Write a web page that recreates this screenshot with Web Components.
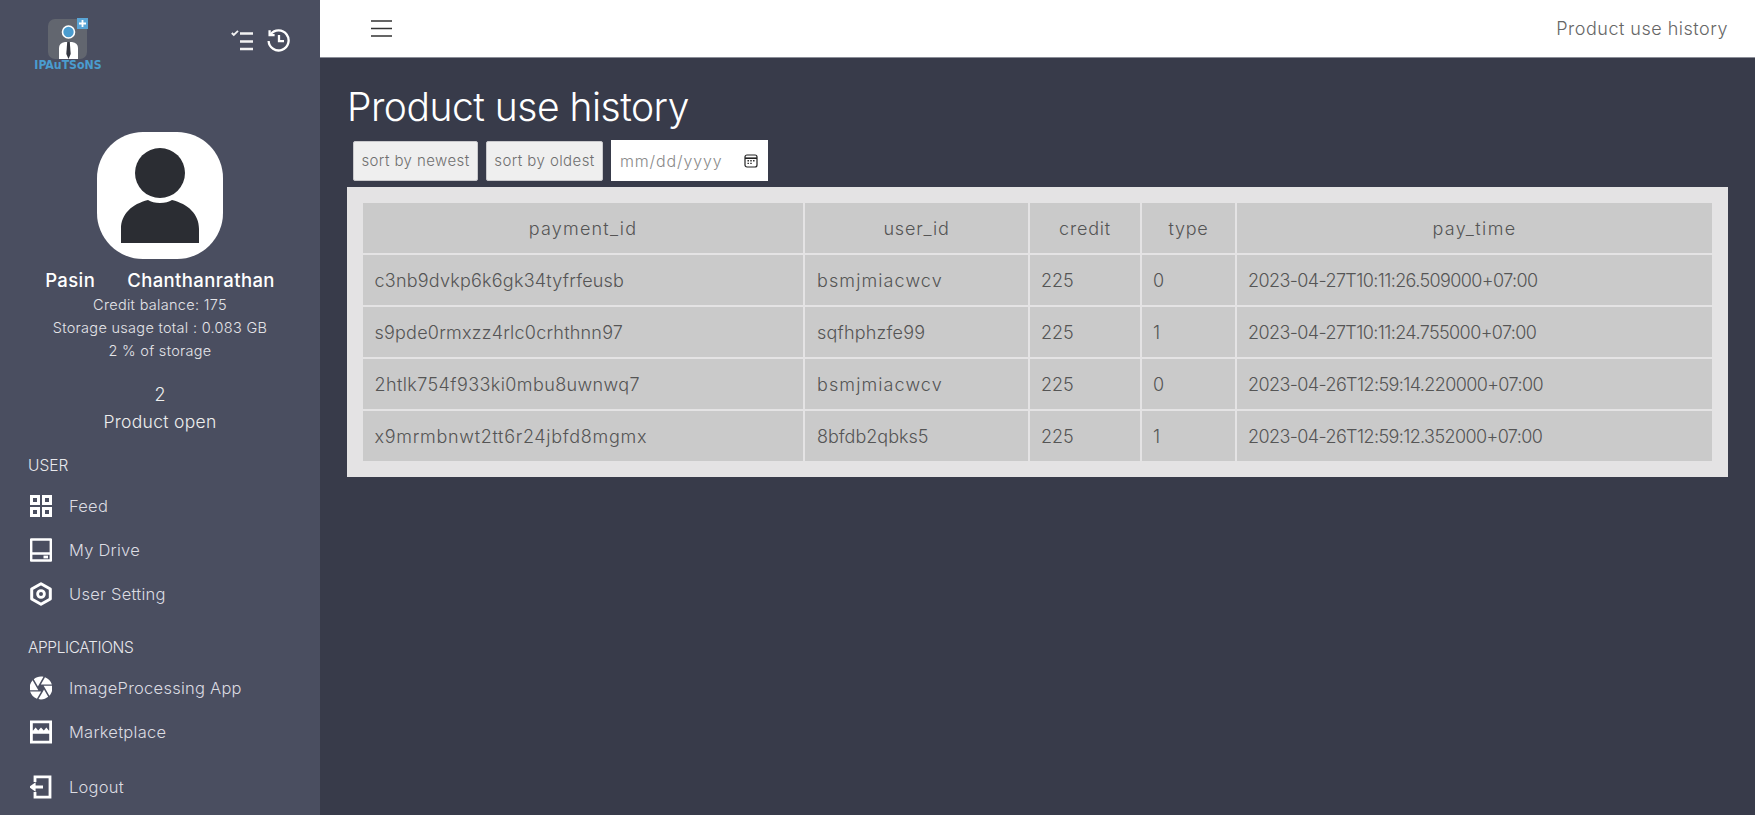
<!DOCTYPE html>
<html>
<head>
<meta charset="utf-8">
<title>Product use history</title>
<style>
html, body { margin: 0; height: 100%; overflow: hidden; }
body { font-family: "Inter", "Liberation Sans", sans-serif; font-weight: 300; }
</style>
</head>
<body>
<app-shell>
  <app-sidebar slot="side"></app-sidebar>
  <app-topbar slot="top" heading="Product use history"></app-topbar>
  <history-page slot="main"></history-page>
</app-shell>

<script>
// Small helper so every element gets its own open shadow root
function shadow(el, html){
  el.attachShadow({mode:"open"}).innerHTML = html;
}

const ICONS = {
  feed: '<path fill="none" stroke="currentColor" stroke-width="3" d="M2.5 2.5h7v7h-7zM14.5 2.5h7v7h-7zM2.5 14.5h7v7h-7zM14.5 14.5h7v7h-7z"/>',
  drive: '<path fill="none" stroke="currentColor" stroke-width="2.6" stroke-linejoin="round" d="M2.1 1.5h19.8v21H2.1zM2.1 15.5h19.8"/><path fill="currentColor" d="M14.5 17.6h4.5v2.8h-4.5z"/>',
  setting: '<path fill="none" stroke="currentColor" stroke-width="3" stroke-linejoin="round" d="M12 1.8l9.3 5.2v10L12 22.2 2.7 17V7z"/><circle cx="12" cy="12" r="3.4" fill="none" stroke="currentColor" stroke-width="2.8"/>',
  camera: '<path fill="currentColor" d="M9.4 10.5l4.77-8.26C13.47 2.09 12.75 2 12 2c-2.4 0-4.6.85-6.32 2.25l3.66 6.35.06-.1zM21.54 9c-.92-2.92-3.15-5.26-6-6.34L11.88 9h9.66zm.26 1h-7.49l.29.5 4.76 8.25C21 16.97 22 14.61 22 12c0-.69-.07-1.35-.2-2zM8.54 12l-3.9-6.75C3.01 7.03 2 9.39 2 12c0 .69.07 1.35.2 2h7.49l-1.15-2zm-6.08 3c.92 2.92 3.15 5.26 6 6.34L12.12 15H2.46zm11.27 0l-3.9 6.76c.7.15 1.42.24 2.17.24 2.4 0 4.6-.85 6.32-2.25l-3.66-6.35-.93 1.6z" transform="translate(-1.7 -1.7) scale(1.14)"/>',
  store: '<path fill="none" stroke="currentColor" stroke-width="2.8" d="M2.4 1.8h19.2v20.4H2.4z"/><path fill="currentColor" d="M2.4 10.6h1.8l2.4-3 2.6 3 2.8-3 2.8 3 2.6-3 2.4 3h1.8v3.2H2.4z"/>',
  logout: '<path fill="none" stroke="currentColor" stroke-width="2.8" d="M6 7V1.8h15v20.4H6V17"/><path fill="currentColor" d="M0 12l6.6-4.8v3.2H14v3.2H6.6v3.2z"/>'
};

class AppShell extends HTMLElement{
  constructor(){
    super();
    shadow(this, `<style>
      :host{display:grid;grid-template-columns:320px 1fr;grid-template-rows:58px 1fr;height:815px;background:#383b4a;}
      ::slotted([slot=side]){grid-row:1 / 3;}
    </style>
    <slot name="side"></slot><slot name="top"></slot><slot name="main"></slot>`);
  }
}

class AppLogo extends HTMLElement{
  constructor(){
    super();
    shadow(this, `<style>
      :host{display:flex;flex-direction:column;align-items:center;width:68px;}
      svg{display:block;}
      span{font:bold 12.2px/13px "DejaVu Sans Condensed","DejaVu Sans",sans-serif;font-stretch:condensed;color:#4a9ccf;margin-top:-1px;white-space:nowrap;}
    </style>
    <svg width="68" height="42" viewBox="0 0 68 42">
      <rect x="14" y="1" width="39" height="40" rx="7" fill="#62666f"/>
      <rect x="43" y="0" width="11" height="11" fill="#5aa5d6"/>
      <path d="M48.5 2v7M45 5.5h7" stroke="#fff" stroke-width="1.8"/>
      <circle cx="34.5" cy="14" r="6" fill="#4a9ccf" stroke="#fff" stroke-width="1.6"/>
      <path d="M25 41V30q0-5 6-6h7q6 1 6 6v11z" fill="#fff"/>
      <path d="M33.2 24h2.6l.9 12-2.2 5-2.2-5z" fill="#33363f"/>
    </svg>
    <span>IPAuTSoNS</span>`);
  }
}

class SideHeader extends HTMLElement{
  constructor(){
    super();
    shadow(this, `<style>
      :host{display:flex;align-items:flex-start;justify-content:space-between;padding:18px 30px 0 34px;height:114px;box-sizing:border-box;}
      div{display:flex;align-items:center;gap:13px;padding-top:11px;}
      svg{display:block;color:#fff;}
    </style>
    <app-logo></app-logo>
    <div>
      <svg width="23" height="22" viewBox="0 0 23 22" fill="none" stroke="#f2f2f2" stroke-width="2.3">
        <path d="M9 3.5H22M9 11.5H22M9 19H22"/>
        <path d="M0.8 3l2 2L7 .8" stroke-width="1.9"/>
      </svg>
      <svg width="23" height="23" viewBox="0 0 23 23" fill="none" stroke="#fff" stroke-width="2.3">
        <path d="M3.6 5.4A10 10 0 1 1 1.6 12"/>
        <path d="M2.6 1.2v5h5"/>
        <path d="M12 6v6.2h5"/>
      </svg>
    </div>`);
  }
}

class UserProfile extends HTMLElement{
  constructor(){
    super();
    shadow(this, `<style>
      :host{display:flex;flex-direction:column;align-items:center;color:#eee;}
      svg{display:block;}
      .name{font-size:18.5px;font-weight:500;letter-spacing:.4px;color:#fff;line-height:24px;margin-top:9px;margin-bottom:1px;white-space:pre;}
      .line{font-size:14.5px;letter-spacing:.3px;line-height:23px;color:#e4e4e8;white-space:nowrap;}
      .count{font-size:18px;line-height:28px;margin-top:19px;}
      .open{font-size:17.5px;letter-spacing:.3px;line-height:25px;margin-bottom:2px;}
    </style>
    <svg width="126" height="127" viewBox="0 0 126 127">
      <rect x="0" y="0" width="126" height="127" rx="46" fill="#fff"/>
      <circle cx="63" cy="41" r="25" fill="#2b2d33"/>
      <path d="M24 111V97c0-15 11-25 27-29 3 2 7 3 12 3s9-1 12-3c16 4 27 14 27 29v14z" fill="#2b2d33"/>
    </svg>
    <div class="name">Pasin      Chanthanrathan</div>
    <div class="line">Credit balance: 175</div>
    <div class="line">Storage usage total : 0.083 GB</div>
    <div class="line">2 % of storage</div>
    <div class="count">2</div>
    <div class="open">Product open</div>`);
  }
}

class NavItem extends HTMLElement{
  constructor(){
    super();
    shadow(this, `<style>
      :host{display:flex;align-items:center;height:44px;padding-left:30px;gap:17px;color:#dcdce2;font-size:16.5px;letter-spacing:.25px;}
      svg{display:block;color:#fff;flex:none;}
    </style>
    <svg width="22" height="24" viewBox="1 0 22 24">${ICONS[this.getAttribute("icon")]}</svg>
    <slot></slot>`);
  }
}

class NavTitle extends HTMLElement{
  constructor(){
    super();
    shadow(this, `<style>
      :host{display:block;padding-left:28px;font-size:15.5px;line-height:22px;color:#e8e8ec;}
    </style><slot></slot>`);
  }
}

class AppSidebar extends HTMLElement{
  constructor(){
    super();
    shadow(this, `<style>
      :host{display:flex;flex-direction:column;background:#4a4e60;height:815px;overflow:hidden;}
      user-profile{margin-top:18px;}
      nav-title{margin-top:19px;margin-bottom:7px;}
      .apps{margin-top:21px;margin-bottom:7px;letter-spacing:-.4px;}
      .out{margin-top:11px;}
    </style>
    <side-header></side-header>
    <user-profile></user-profile>
    <nav-title>USER</nav-title>
    <nav-item icon="feed">Feed</nav-item>
    <nav-item icon="drive">My Drive</nav-item>
    <nav-item icon="setting">User Setting</nav-item>
    <nav-title class="apps">APPLICATIONS</nav-title>
    <nav-item icon="camera">ImageProcessing App</nav-item>
    <nav-item icon="store">Marketplace</nav-item>
    <nav-item icon="logout" class="out">Logout</nav-item>`);
  }
}

class AppTopbar extends HTMLElement{
  constructor(){
    super();
    shadow(this, `<style>
      :host{display:flex;align-items:center;justify-content:space-between;background:#fff;height:58px;box-sizing:border-box;padding:0 27px 1px 51px;border-bottom:1px solid #8b8e98;}
      svg{display:block;}
      span{font-size:18px;letter-spacing:.5px;color:#666;}
    </style>
    <svg width="21" height="17" viewBox="0 0 21 17" stroke="#333" stroke-width="1.6"><path d="M0 1h21M0 8.5h21M0 16h21"/></svg>
    <span>${this.getAttribute("heading")}</span>`);
  }
}

class SortButton extends HTMLElement{
  constructor(){
    super();
    shadow(this, `<style>
      :host{display:flex;align-items:center;justify-content:center;height:40px;box-sizing:border-box;background:#efefef;border:1px solid #c9c9cc;border-radius:2px;font-size:15px;letter-spacing:.42px;color:#6f6f6f;white-space:nowrap;}
    </style><slot></slot>`);
  }
}

class DateField extends HTMLElement{
  constructor(){
    super();
    shadow(this, `<style>
      :host{display:flex;align-items:center;justify-content:space-between;width:157px;height:41px;box-sizing:border-box;padding:0 10px 0 9px;background:#fff;font-size:16px;letter-spacing:.85px;color:#8a8a8a;}
      svg{display:block;}
    </style>
    <span>mm/dd/yyyy</span>
    <svg width="14" height="14" viewBox="0 0 14 14" fill="none" stroke="#222" stroke-width="1.2">
      <rect x="1" y="1" width="12" height="12" rx="2"/>
      <path d="M1 4.2h12" stroke-width="1.6"/>
      <path d="M3.5 6.8h1.4M6.3 6.8h1.4M9.1 6.8h1.4M3.5 9.4h1.4M6.3 9.4h1.4" stroke-width="1.4"/>
    </svg>`);
  }
}

class PaymentTable extends HTMLElement{
  static get columns(){ return ["payment_id","user_id","credit","type","pay_time"]; }
  static get rows(){
    return [
      ["c3nb9dvkp6k6gk34tyfrfeusb","bsmjmiacwcv","225","0","2023-04-27T10:11:26.509000+07:00"],
      ["s9pde0rmxzz4rlc0crhthnn97","sqfhphzfe99","225","1","2023-04-27T10:11:24.755000+07:00"],
      ["2htlk754f933ki0mbu8uwnwq7","bsmjmiacwcv","225","0","2023-04-26T12:59:14.220000+07:00"],
      ["x9mrmbnwt2tt6r24jbfd8mgmx","8bfdb2qbks5","225","1","2023-04-26T12:59:12.352000+07:00"]
    ];
  }
  constructor(){
    super();
    const head = PaymentTable.columns.map(c => `<th>${c}</th>`).join("");
    const body = PaymentTable.rows.map(r => "<tr>" + r.map(c => `<td>${c}</td>`).join("") + "</tr>").join("");
    shadow(this, `<style>
      :host{display:block;background:#e4e3e4;padding:14px;}
      table{width:100%;table-layout:fixed;border-collapse:separate;border-spacing:2px;margin:0;font-size:18px;color:#555;}
      th,td{background:#cacaca;height:50px;padding:0 12px;box-sizing:border-box;font-weight:300;white-space:nowrap;}
      th{text-align:center;letter-spacing:.8px;}
      th:first-child{letter-spacing:1.2px;}
      th:last-child{letter-spacing:1.4px;}
      td{text-align:left;}
      td:first-child{letter-spacing:.22px;padding-left:11.5px;}
      tr:nth-child(3) td:first-child{letter-spacing:.4px;}
      tr:nth-child(4) td:first-child{letter-spacing:.7px;}
      td:nth-child(2){letter-spacing:.2px;}
      tr:nth-child(odd) td:nth-child(2){letter-spacing:1.1px;}
      tr:nth-child(4) td:nth-child(2){letter-spacing:0;}
      td:nth-child(3){letter-spacing:0;padding-left:11px;}
      td:nth-child(4){padding-left:11px;}
      td:nth-child(5){letter-spacing:-.6px;padding-left:11px;}
    </style>
    <table>
      <colgroup><col style="width:440px"><col style="width:223px"><col style="width:110px"><col style="width:93px"><col></colgroup>
      <thead><tr>${head}</tr></thead>
      <tbody>${body}</tbody>
    </table>`);
  }
}

class HistoryPage extends HTMLElement{
  constructor(){
    super();
    shadow(this, `<style>
      :host{display:block;padding:23px 27px 0;color:#fff;}
      h1{margin:0;font-size:39px;letter-spacing:-.5px;font-weight:300;line-height:52px;}
      .tools{display:flex;align-items:center;gap:8px;margin:7px 0 6px 6px;}
      .newest{width:125px;}
      .oldest{width:117px;}
    </style>
    <h1>Product use history</h1>
    <div class="tools">
      <sort-button class="newest">sort by newest</sort-button>
      <sort-button class="oldest">sort by oldest</sort-button>
      <date-field></date-field>
    </div>
    <payment-table></payment-table>`);
  }
}

customElements.define("app-shell", AppShell);
customElements.define("app-logo", AppLogo);
customElements.define("side-header", SideHeader);
customElements.define("user-profile", UserProfile);
customElements.define("nav-item", NavItem);
customElements.define("nav-title", NavTitle);
customElements.define("app-sidebar", AppSidebar);
customElements.define("app-topbar", AppTopbar);
customElements.define("sort-button", SortButton);
customElements.define("date-field", DateField);
customElements.define("payment-table", PaymentTable);
customElements.define("history-page", HistoryPage);
</script>
</body>
</html>
